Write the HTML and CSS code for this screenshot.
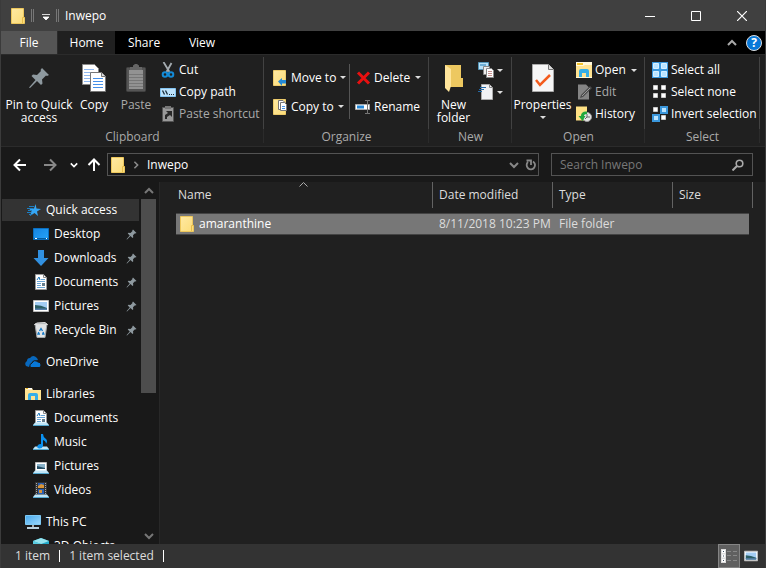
FILE: index.html
```html
<!DOCTYPE html>
<html lang="en">
<head>
<meta charset="utf-8">
<title>Inwepo</title>
<link rel="stylesheet" href="styles.css">
</head>
<body>
<svg class="sprite" aria-hidden="true">
  <linearGradient id="gold" x1="0" x2="1" y1="0" y2="1"><stop offset="0" stop-color="#ffe9a2"/><stop offset="1" stop-color="#fbdc78"/></linearGradient>
  <linearGradient id="sky" x1="0" x2="1" y1="0" y2="1"><stop offset="0" stop-color="#1583e0"/><stop offset="1" stop-color="#25a4fb"/></linearGradient>
  <linearGradient id="screen" x1="0" x2="1" y1="0" y2="1"><stop offset="0" stop-color="#48a8ec"/><stop offset="1" stop-color="#9bd8fb"/></linearGradient>
  <symbol id="folder" viewBox="0 0 16 16"><path d="M1.500.500h12v9h1v6h-13z" fill="url(#gold)" stroke="#edc75c"/><path d="M12.500 15V9.500h2" fill="none" stroke="#e9bd48"/></symbol>
  <symbol id="pin" viewBox="0 0 22 22"><path d="M14 1l7 7-2 1-1-.5-4 4 .5 4-1.500 1.500-4-4L2 21l-1-.5L7.500 13l-4-4L5 7.500l4 .5 4-4-.5-1z" fill="#8e999f"/></symbol>
  <symbol id="copy" viewBox="0 0 24 28"><path d="M.5.500h12l4 4v16h-16z" fill="#fff" stroke="#8a8a8a"/><path d="M2 5.500h10M2 8.500h11M2 11.500h9M2 14.500h9M2 17.500h9" stroke="#8fb8f0"/><path d="M8.500 8.500h11l4 4v15h-15z" fill="#fff" stroke="#777"/><path d="M19.500 8.500v4h4" fill="#ddd" stroke="#777"/><path d="M11 14.500h10M11 17.500h10M11 20.500h10M11 23.500h10" stroke="#4690e8"/></symbol>
  <symbol id="paste" viewBox="0 0 20 28"><rect x=".5" y="3.500" width="19" height="24" rx="1" fill="#555" stroke="#424242"/><path d="M3 6h14v19H3z" fill="#929292"/><path d="M3 10.500h14M3 13.500h14M3 16.500h14M3 19.500h14M3 22.500h14" stroke="#777"/><path d="M4 6V3h3V1.500L9 0h2l2 1.500V3h3v3z" fill="#666"/></symbol>
  <symbol id="cut" viewBox="0 0 16 16"><path d="M3.500 0l6 10M11.500 1L6.500 10" stroke="#a4abb0" stroke-width="1.800"/><circle cx="5" cy="12.500" r="2.300" fill="none" stroke="#138bd8" stroke-width="2"/><circle cx="11" cy="12.500" r="2.300" fill="none" stroke="#138bd8" stroke-width="2"/></symbol>
  <symbol id="path" viewBox="0 0 16 16"><path d="M.5 4.500h15v8H.500z" fill="#bde2fb" stroke="#83c4f2"/><path d="M2.500 6.500l2 4M5.500 6.500l2 4" fill="none" stroke="#182c3a" stroke-width="1.300"/><path d="M9 10.500h1M11 10.500h1M13 10.500h1" stroke="#182c3a"/></symbol>
  <symbol id="shortcut" viewBox="0 0 16 16"><path d="M2.500 1.500h11v14h-11z" fill="#999" stroke="#555"/><path d="M5 0h6v3H5z" fill="#777"/><path d="M5 13V9l3-2-2-2h6v6l-2-2-3 2v2z" fill="#292929"/></symbol>
  <symbol id="move" viewBox="0 0 16 16"><path d="M.5.500h12v15H.500z" fill="url(#gold)" stroke="#edcb6b"/><path d="M5 11.500L9 8v2h4v3.500H9V16z" fill="#2489d6"/></symbol>
  <symbol id="copyto" viewBox="0 0 16 16"><path d="M.5.500h12v15H.500z" fill="url(#gold)" stroke="#edcb6b"/><path d="M5.500 1.500H10l2 2v7H5.500z" fill="#fff" stroke="#777"/><path d="M7.500 3.500h4l2 2v6h-6z" fill="#fff" stroke="#777"/><path d="M9 7.500h3M9 9.500h3" stroke="#4594e8"/></symbol>
  <symbol id="delete" viewBox="0 0 16 16"><path d="M3 2.500l11 11M14 2.500l-11 11" stroke="#e81010" stroke-width="3"/></symbol>
  <symbol id="rename" viewBox="0 0 16 16"><path d="M.5 5.500h14v5H.5z" fill="#fff" stroke="#aaa"/><path d="M2 6.500h7v3H2z" fill="#2588d8"/><path d="M10 1.500h2.500v13H10M15 1.500h-2.500v13H15" fill="none" stroke="#777"/></symbol>
  <symbol id="newfolder" viewBox="0 0 18 28"><path d="M0 1h16v13h2v9H3z" fill="#edc860"/><path d="M0 1l6 4v17l-2 6-4-4z" fill="#ffe59b"/></symbol>
  <symbol id="newitem" viewBox="0 0 16 16"><path d="M.5.500h10v7H.500z" fill="#b9e1f7" stroke="#5495b8"/><path d="M2 3h6" stroke="#247ab0"/><path d="M5.500 4.500h6v8h-6z" fill="#eee" stroke="#888"/><path d="M8.500 6.500h5l2 2v7h-7z" fill="#fff" stroke="#888"/><path d="M10 9.500h4M10 11.500h4M10 13.500h4" stroke="#c89290"/></symbol>
  <symbol id="easy" viewBox="0 0 16 16"><path d="M3.500.500h8l3 3v12h-11z" fill="#f1f2f5" stroke="#aaa"/><path d="M11.500.500v3h3" fill="none" stroke="#888"/><path d="M2 3.500h6M1 5.500h5M0 7.500h4" stroke="#256aa8"/></symbol>
  <symbol id="props" viewBox="0 0 22 28"><path d="M.5.500h16l5 5v22H.500z" fill="#f6f6f6" stroke="#aaa"/><path d="M16.500.500v5h5" fill="#ddd" stroke="#777"/><path d="M4 16l4 5L18 11" fill="none" stroke="#f35b1c" stroke-width="2.500"/></symbol>
  <symbol id="open" viewBox="0 0 16 16"><path d="M0 0h16v16H0z" fill="#fff8dc"/><path d="M0 4h7l2-1h7v12H0z" fill="#ffe391"/><path d="M1 1h6v2H1z" fill="#f4c32b"/><path d="M3 15V9q0-2 2-2h6q2 0 2 2v6h-3v-4H6v4z" fill="#35aee8"/></symbol>
  <symbol id="edit" viewBox="0 0 16 16"><path d="M2 .5h8l3 3v12H2z" fill="#858585"/><path d="M4 14l1-3 9-9 2 2-9 9z" fill="#4b4b4b"/><path d="M6 12l8-8" stroke="#999"/></symbol>
  <symbol id="history" viewBox="0 0 16 16"><path d="M0 .5h11v14H0z" fill="#ffe184"/><circle cx="11" cy="11" r="4.500" fill="#e7e7e7" stroke="#999"/><path d="M11 8v3h3M11 11l-2 2" fill="none" stroke="#666"/><path d="M11 5.500Q5 5 5 10H2.500l4 5 3-5H8q0-2 3-2z" fill="#22a83c"/></symbol>
  <symbol id="all" viewBox="0 0 16 16"><path d="M0 0h16v16H0z" fill="#3a97dc"/><path d="M1.500 1.500h5v5h-5zM9.500 1.500h5v5h-5zM1.500 9.500h5v5h-5zM9.500 9.500h5v5h-5z" fill="#b9e3ff" stroke="#d6efff"/></symbol>
  <symbol id="none" viewBox="0 0 16 16"><path d="M1.500 1.500h4v4h-4zM9.500 1.500h4v4h-4zM1.500 9.500h4v4h-4zM9.500 9.500h4v4h-4z" fill="#fff" stroke="#c8c8c8"/></symbol>
  <symbol id="invert" viewBox="0 0 16 16"><path d="M1.500 1.500h4v4h-4zM9.500 9.500h4v4h-4z" fill="#fff" stroke="#c8c8c8"/><path d="M9 1h6v6H9zM1 9h6v6H1z" fill="#b9e3ff" stroke="#3a97dc" stroke-width="2"/></symbol>
  <symbol id="star" viewBox="0 0 16 16"><path d="M9.500 2l1 4.500 4.500.500-4 2.500 1 4.500-3.500-3L4 14l1.500-4.500L3 6.500h5z" fill="#35a6f4"/><path d="M3 4.500h5M1 6.500h6M2 8.500h4M1 10.500h4M3 12.500h3" stroke="#1d7fc4"/></symbol>
  <symbol id="desktop" viewBox="0 0 16 16"><path d="M.5 2.500h15v11H.500z" fill="url(#sky)" stroke="#0a6fc0"/><path d="M1 12.500h14" stroke="#075c9e"/><path d="M2 12.500h2M13 12.500h1" stroke="#fff"/></symbol>
  <symbol id="down" viewBox="0 0 16 16"><path d="M5 0h6v8h4.500L8 16 .5 8H5z" fill="#3190e0"/></symbol>
  <symbol id="doc" viewBox="0 0 16 16"><path d="M2.500.500h8l3 3v12h-11z" fill="#fff" stroke="#999"/><path d="M10.500.500v3h3" fill="none" stroke="#888"/><path d="M8 5.500h4M4 7.500h8M4 9.500h4M4 11.500h4M4 13.500h8" stroke="#6aa5d5"/><path d="M4 6l2-3 1 3" fill="none" stroke="#207ac0"/><path d="M9 9h3v3H9z" fill="#667d8c"/></symbol>
  <symbol id="picture" viewBox="0 0 16 16"><path d="M.5 2.500h15v11H.500z" fill="#fff" stroke="#bbb"/><path d="M2 4h12v8H2z" fill="#a3cdf4"/><path d="M2 7q6 0 12 3v2H2z" fill="#2b5f66"/><path d="M2 10.500h12V12H2z" fill="#557eaa"/></symbol>
  <symbol id="bin" viewBox="0 0 16 16"><path d="M2 2h12l-2 13.500H4z" fill="#e1e4e6" stroke="#a2a6a8"/><path d="M1.500 2.500L4 1l8-.5 2.500 2z" fill="#b2b8bb" stroke="#ddd"/><path d="M6.500 9L8 6.500 9.500 9M10 10l.8 2H9M7 12H5l.8-2" fill="none" stroke="#187bc8" stroke-width="1.400"/></symbol>
  <symbol id="cloud" viewBox="0 0 16 16"><path d="M1 12q-2-3 1-5 0-3 3-3 3-4 7 0l1 2-5 1-4 6z" fill="#0868bd"/><path d="M5 13q-1-3 2-4 2-4 6-1 3 0 3 3t-2 2.500H6z" fill="#0878d7" stroke="#191919"/></symbol>
  <symbol id="library" viewBox="0 0 16 16"><path d="M0 2h7l1 2h8v10H0z" fill="#ffe391"/><path d="M1 2h6v1.500H1z" fill="#fff"/><path d="M1 2.500h2" stroke="#f0b71c"/><path d="M3 14V9q0-2 2-2h6q2 0 2 2v5h-3v-4H6v4z" fill="#35aee8"/></symbol>
  <symbol id="stand" viewBox="0 0 16 16"><path d="M2 12.500h12l2 2.500H0z" fill="#bfe5f7"/><path d="M0 15.500h16" stroke="#54a7ce"/></symbol>
  <symbol id="libdoc" viewBox="0 0 16 16"><use href="#doc"/><use href="#stand"/></symbol>
  <symbol id="music" viewBox="0 0 16 16"><use href="#stand"/><path d="M8 0h2q0 3 3 5 2 2 0 5 0-3-3-4v6q-1 3-4 2.500-3-1-1-3.500 1-1 3-1z" fill="#0b91ef"/></symbol>
  <symbol id="libpic" viewBox="0 0 16 16"><path d="M2.500 4.500h11v9h-11z" fill="#fff" stroke="#bbb"/><path d="M4 6h8v5H4z" fill="#88b1c8"/><path d="M4 8l8 2v1H4z" fill="#264f66"/><use href="#stand"/></symbol>
  <symbol id="video" viewBox="0 0 16 16"><path d="M2 0h12v14H2z" fill="#333"/><path d="M3.500 1v12M12.500 1v12" stroke="#aaa" stroke-dasharray="1 1"/><path d="M5 1h6v5H5zM5 7h6v5H5z" fill="#275eb4"/><path d="M5 4l3-2 3 1v3H5zM6 8h3v3H6z" fill="#d89437"/><use href="#stand"/></symbol>
  <symbol id="pc" viewBox="0 0 16 16"><path d="M.5 1.500h15v9H.500z" fill="url(#screen)" stroke="#7ec9f3"/><path d="M7 11h2v2H7z" fill="#aaa"/><path d="M2 14h12" stroke="#b9d0dd" stroke-width="2"/></symbol>
  <symbol id="cube" viewBox="0 0 16 16"><path d="M8 0l8 3v9l-8 4-8-4V3z" fill="#22a9c8"/><path d="M0 3l8-3 8 3-8 3z" fill="#98e4ef"/><path d="M0 3l8 3v10l-8-4z" fill="#5bcbe0"/></symbol>
  <symbol id="down-chevron" viewBox="0 0 10 10"><path d="M1 3l4 4 4-4" fill="none" stroke="currentColor" stroke-width="2"/></symbol>
  <symbol id="arrow" viewBox="0 0 14 14"><path d="M13 7H2M7 1.500L1.500 7 7 12.500" fill="none" stroke="currentColor" stroke-width="2"/></symbol>
</svg>
<div class="window">
  <header class="titlebar">
    <svg class="i16"><use href="#folder"/></svg>
    <span class="grip"></span>
    <button class="plain quick" aria-label="Customize toolbar"><svg width="8" height="6"><path d="M0 .5h8M1 3h6L4 6z" fill="#fff" stroke="#fff" stroke-width=".8"/></svg></button>
    <span class="grip"></span>
    <h1>Inwepo</h1>
    <div class="controls">
      <button class="plain" aria-label="Minimize"><svg width="10" height="10"><path d="M0 5.500h10" stroke="#fff"/></svg></button>
      <button class="plain" aria-label="Maximize"><svg width="10" height="10"><path d="M.5.500h9v9h-9z" fill="none" stroke="#fff"/></svg></button>
      <button class="plain" aria-label="Close"><svg width="10" height="10"><path d="M0 0l10 10M10 0L0 10" stroke="#fff" stroke-width="1.200"/></svg></button>
    </div>
  </header>
  <nav class="tabs" aria-label="Ribbon tabs">
    <button class="plain file">File</button><button class="plain active">Home</button><button class="plain">Share</button><button class="plain">View</button>
    <div class="help">
      <button class="plain collapse up" aria-label="Collapse ribbon"><svg class="i10"><use href="#down-chevron"/></svg></button>
      <button class="plain question" aria-label="Help">?</button>
    </div>
  </nav>
  <div class="ribbon">
    <section class="group">
      <div class="tools">
        <button class="plain big wide"><svg width="22" height="32"><use href="#pin"/></svg>Pin to Quick access</button>
        <button class="plain big"><svg width="24" height="28"><use href="#copy"/></svg>Copy</button>
        <button class="plain big dim"><svg width="20" height="28"><use href="#paste"/></svg>Paste</button>
        <div class="list">
          <button class="plain"><svg class="i16"><use href="#cut"/></svg>Cut</button>
          <button class="plain"><svg class="i16"><use href="#path"/></svg>Copy path</button>
          <button class="plain dim"><svg class="i16"><use href="#shortcut"/></svg>Paste shortcut</button>
        </div>
      </div>
      <h2>Clipboard</h2>
    </section>
    <section class="group">
      <div class="tools">
        <div class="list loose first">
          <button class="plain"><svg class="i16"><use href="#move"/></svg>Move to<i class="caret"></i></button>
          <button class="plain"><svg class="i16"><use href="#copyto"/></svg>Copy to<i class="caret"></i></button>
        </div>
        <div class="list loose second">
          <button class="plain"><svg class="i16"><use href="#delete"/></svg>Delete<i class="caret"></i></button>
          <button class="plain"><svg class="i16"><use href="#rename"/></svg>Rename</button>
        </div>
      </div>
      <h2>Organize</h2>
    </section>
    <section class="group">
      <div class="tools">
        <button class="plain big narrow"><svg width="20" height="28"><use href="#newfolder"/></svg>New folder</button>
        <div class="list minis">
          <button class="plain" aria-label="New item"><svg class="i16"><use href="#newitem"/></svg><i class="caret"></i></button>
          <button class="plain" aria-label="Easy access"><svg class="i16"><use href="#easy"/></svg><i class="caret"></i></button>
        </div>
      </div>
      <h2>New</h2>
    </section>
    <section class="group">
      <div class="tools">
        <button class="plain big property"><svg width="22" height="28"><use href="#props"/></svg>Properties<i class="caret"></i></button>
        <div class="list">
          <button class="plain"><svg class="i16"><use href="#open"/></svg>Open<i class="caret"></i></button>
          <button class="plain dim"><svg class="i16"><use href="#edit"/></svg>Edit</button>
          <button class="plain"><svg class="i16"><use href="#history"/></svg>History</button>
        </div>
      </div>
      <h2>Open</h2>
    </section>
    <section class="group">
      <div class="tools">
        <div class="list select">
          <button class="plain"><svg class="i16"><use href="#all"/></svg>Select all</button>
          <button class="plain"><svg class="i16"><use href="#none"/></svg>Select none</button>
          <button class="plain"><svg class="i16"><use href="#invert"/></svg>Invert selection</button>
        </div>
      </div>
      <h2>Select</h2>
    </section>
  </div>
  <div class="navigation">
    <button class="plain arrow" aria-label="Back"><svg class="i14"><use href="#arrow"/></svg></button>
    <button class="plain arrow gray" aria-label="Forward"><svg class="i14 flip"><use href="#arrow"/></svg></button>
    <button class="plain recent" aria-label="Recent locations"><svg width="8" height="8"><use href="#down-chevron"/></svg></button>
    <button class="plain upward" aria-label="Up"><svg class="i14 north"><use href="#arrow"/></svg></button>
    <div class="address">
      <svg class="i16"><use href="#folder"/></svg>
      <svg class="crumb gray" width="8" height="8"><use href="#down-chevron"/></svg>
      <a href="#">Inwepo</a>
      <button class="plain gray previous" aria-label="Previous locations"><svg class="i10"><use href="#down-chevron"/></svg></button>
      <button class="plain gray refresh" aria-label="Refresh"><svg width="12" height="12"><path d="M8 2.500a4.200 4.200 0 1 1-5 .5M1.500 1.500H6v4.500" fill="none" stroke="currentColor" stroke-width="1.800"/></svg></button>
    </div>
    <label class="search"><input type="search" placeholder="Search Inwepo" aria-label="Search Inwepo"><svg width="12" height="12"><circle cx="7.500" cy="4.500" r="3.300" fill="none" stroke="#aaa" stroke-width="1.600"/><path d="M5 7l-4.500 4.500" stroke="#aaa" stroke-width="2"/></svg></label>
  </div>
  <div class="workspace">
    <aside>
      <nav class="tree" aria-label="Folders">
        <a href="#" class="selected"><svg class="i16"><use href="#star"/></svg>Quick access</a>
        <a href="#" class="child"><svg class="i16"><use href="#desktop"/></svg>Desktop<svg class="pinned"><use href="#pin"/></svg></a>
        <a href="#" class="child"><svg class="i16"><use href="#down"/></svg>Downloads<svg class="pinned"><use href="#pin"/></svg></a>
        <a href="#" class="child"><svg class="i16"><use href="#doc"/></svg>Documents<svg class="pinned"><use href="#pin"/></svg></a>
        <a href="#" class="child"><svg class="i16"><use href="#picture"/></svg>Pictures<svg class="pinned"><use href="#pin"/></svg></a>
        <a href="#" class="child"><svg class="i16"><use href="#bin"/></svg>Recycle Bin<svg class="pinned"><use href="#pin"/></svg></a>
        <a href="#" class="root"><svg class="i16"><use href="#cloud"/></svg>OneDrive</a>
        <a href="#" class="root"><svg class="i16"><use href="#library"/></svg>Libraries</a>
        <a href="#" class="child"><svg class="i16"><use href="#libdoc"/></svg>Documents</a>
        <a href="#" class="child"><svg class="i16"><use href="#music"/></svg>Music</a>
        <a href="#" class="child"><svg class="i16"><use href="#libpic"/></svg>Pictures</a>
        <a href="#" class="child"><svg class="i16"><use href="#video"/></svg>Videos</a>
        <a href="#" class="root"><svg class="i16"><use href="#pc"/></svg>This PC</a>
        <a href="#" class="child"><svg class="i16"><use href="#cube"/></svg>3D Objects</a>
      </nav>
      <div class="scroll">
        <svg class="i10 up"><use href="#down-chevron"/></svg>
        <div class="track"><div class="thumb"></div></div>
        <svg class="i10"><use href="#down-chevron"/></svg>
      </div>
    </aside>
    <main>
      <table>
        <colgroup><col><col class="c120"><col class="c120"><col class="c80"></colgroup>
        <thead><tr><th>Name<svg class="sort" width="9" height="5"><path d="M.5 4.500l4-4 4 4" fill="none" stroke="#aaa"/></svg></th><th>Date modified</th><th>Type</th><th>Size</th></tr></thead>
        <tbody><tr><td><span class="filename"><svg class="i16"><use href="#folder"/></svg>amaranthine</span></td><td class="meta">8/11/2018 10:23 PM</td><td class="meta">File folder</td><td></td></tr></tbody>
      </table>
    </main>
  </div>
  <footer>
    <span>1 item</span><span>1 item selected</span>
    <div class="views">
      <button class="plain details" aria-label="Details view"><svg width="16" height="14"><path d="M0 0h5v14H0z" fill="#ddd"/><path d="M1 1h3v3H1zM1 5.500h3v3H1zM1 10h3v3H1z" fill="#fff"/><path d="M2 2h1v1H2zM2 6.500h1v1H2zM2 11h1v1H2z" fill="#456"/><path d="M6 2.500h4M12 2.500h4M6 6.500h4M12 6.500h4M6 11.500h4M12 11.500h4" stroke="#888"/></svg></button>
      <button class="plain thumbs" aria-label="Large icons"><svg width="14" height="14"><use href="#picture"/></svg></button>
    </div>
  </footer>
</div>
</body>
</html>
```
FILE: styles.css
```css
* { box-sizing: border-box; }
body { margin: 0; background: #191919; color: #fff; font: 12px/16px "Open Sans", "Noto Sans", sans-serif; }
h1, h2 { margin: 0; font: inherit; }
svg { flex: none; }
a { color: inherit; text-decoration: none; }
.sprite { position: absolute; width: 0; height: 0; }
.plain { display: flex; align-items: center; justify-content: center; padding: 0; border: 0; background: none; color: inherit; font: inherit; }
.i16 { width: 16px; height: 16px; }
.i14 { width: 14px; height: 14px; }
.i10 { width: 10px; height: 10px; }
.gray { color: #888; }
.up svg, svg.up { transform: rotate(180deg); }
.flip { transform: scaleX(-1); }
.north { transform: rotate(90deg); }
.caret { width: 0; height: 0; border: 3px solid transparent; border-top-color: #ddd; border-bottom: 0; }
.window { display: flex; flex-direction: column; height: 100vh; border-left: 1px solid #3b3b3b; border-right: 1px solid #3b3b3b; }

.titlebar { display: flex; align-items: center; height: 31px; padding-left: 9px; background: #404040; }
.grip { width: 3px; height: 13px; margin-left: 5px; border: 1px solid #777; border-width: 0 1px; }
.quick { width: 8px; margin: 2px 1px 0 8px; }
.titlebar h1 { margin-left: 6px; }
.controls { display: flex; margin-left: auto; }
.controls button { width: 46px; height: 31px; }

.tabs { display: flex; height: 23px; background: #000; }
.tabs > button { width: 58px; }
.tabs > .file { width: 56px; background: #555; }
.tabs > .active { background: #202020; border-left: 1px solid #2b2b2b; }
.help { display: flex; align-items: center; gap: 9px; margin-left: auto; padding-right: 3px; }
.collapse { color: #aaa; }
.question { width: 16px; height: 16px; border: 1px solid #ddd; border-radius: 50%; background: #0878d8; font-weight: 700; }

.ribbon { display: grid; grid-template-columns: 263px 165px 83px 133px 115px; height: 93px; padding-top: 2px; border: 1px solid #2b2b2b; border-width: 1px 0; background: #202020; }
.group { display: flex; flex-direction: column; position: relative; }
.group::after { content: ""; position: absolute; top: 0; right: 0; width: 1px; height: 86px; background: linear-gradient(#424242 72px, #2b2b2b 72px); }
.tools { display: flex; height: 72px; }
.group h2 { color: #aaa; text-align: center; }
.big { flex-direction: column; justify-content: flex-start; width: 42px; padding-top: 7px; line-height: 13px; }
.big svg { margin-bottom: 6px; }
.wide { width: 72px; padding: 5px 0 0 4px; }
.wide svg { margin-bottom: 4px; }
.dim { color: #aaa; }
.list { display: flex; flex-direction: column; padding: 2px 0 0 3px; }
.list button { height: 22px; justify-content: flex-start; gap: 3px; white-space: nowrap; }
.list .caret { margin-left: 2px; }
.loose { padding-top: 6px; }
.loose button { height: 29px; }
.first { width: 85px; padding-left: 9px; }
.first button { gap: 2px; }
.second { padding-left: 6px; position: relative; }
.second::before { content: ""; position: absolute; left: 0; top: 7px; width: 1px; height: 55px; background: #555; }
.narrow { width: 49px; }
.minis { padding-left: 0; }
.minis .caret { margin-left: 0; }
.property { width: 61px; }
.property .caret { margin-top: 5px; }
.select { padding-left: 7px; }

.navigation { display: flex; align-items: center; height: 35px; padding: 0 12px 0 12px; }
.arrow { margin-right: 16px; }
.recent { margin-left: -3px; }
.upward { margin: 0 6px 0 9px; }
.address { display: flex; align-items: center; flex: 1; height: 23px; padding: 0 1px 0 2px; border: 1px solid #535353; }
.crumb { margin: 0 7px 0 6px; transform: rotate(-90deg); }
.previous { margin-left: auto; }
.refresh { margin-left: 6px; }
.search { display: flex; align-items: center; width: 202px; height: 23px; margin-left: 12px; padding: 0 8px; border: 1px solid #535353; }
.search input { flex: 1; min-width: 0; padding: 0; border: 0; outline: 0; background: none; color: #fff; font: inherit; }
.search input::placeholder { color: #777; opacity: 1; }

.workspace { display: flex; flex: 1; min-height: 0; }
aside { display: flex; width: 159px; border-right: 1px solid #282828; }
.tree { flex: 1; padding: 16px 0 0 1px; overflow: hidden; }
.tree a { display: flex; align-items: center; gap: 4px; height: 22px; margin: 1px 0 2px; padding-left: 24px; }
.tree .child { padding-left: 31px; gap: 5px; }
.tree .root { margin-top: 10px; padding-left: 23px; gap: 5px; }
.tree .selected { background: #333; }
.pinned { width: 11px; height: 11px; margin: 0 2px 0 auto; }
.scroll { display: flex; flex-direction: column; align-items: center; width: 20px; padding: 4px 3px 3px 2px; color: #777; }
.track { flex: 1; width: 15px; margin: 3px 0; }
.thumb { height: 59%; background: #4d4d4d; }
main { flex: 1; padding: 0 12px 0 16px; background: #202020; }
table { width: 100%; border-spacing: 0; table-layout: fixed; }
.c120 { width: 120px; }
.c80 { width: 80px; }
th { position: relative; height: 26px; padding: 0 0 0 6px; border-right: 1px solid #636363; color: #ddd; text-align: left; font-weight: 400; }
th:first-child { padding-left: 2px; }
.sort { position: absolute; left: 48%; top: 0; }
tbody::before { content: ""; display: block; height: 5px; }
td { height: 22px; padding: 0 0 0 6px; background: #777; box-shadow: inset 0 1px #444, inset 0 -1px #444; white-space: nowrap; }
td:first-child { padding-left: 3px; }
td:last-child { border-right: 4px solid transparent; background-clip: padding-box; }
.meta { color: #ddd; }
.filename { display: flex; align-items: center; gap: 4px; }

footer { display: flex; align-items: center; height: 24px; padding-left: 14px; background: #333; color: #ddd; }
footer > span { margin-right: 9px; padding-right: 9px; border-right: 1px solid #fff; line-height: 12px; }
.views { display: flex; height: 24px; margin-left: auto; padding-right: 7px; gap: 4px; }
.details { width: 22px; border: 1px solid #858585; background: #606060; }
```
